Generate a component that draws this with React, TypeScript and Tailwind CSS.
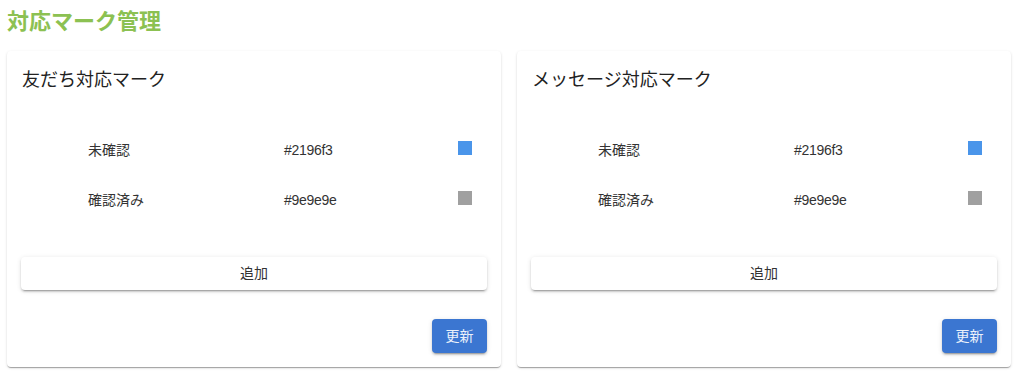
import React from "react";

type Mark = { label: string; color: string; swatch: string };

const marks: Mark[] = [
  { label: "未確認", color: "#2196f3", swatch: "bg-[#4a95ea]" },
  { label: "確認済み", color: "#9e9e9e", swatch: "bg-[#a0a0a0]" },
];

function MarkCard({ title }: { title: string }) {
  return (
    <div className="bg-white rounded-[4px] shadow-[0_2px_1px_-1px_rgba(0,0,0,0.2),0_1px_1px_0_rgba(0,0,0,0.14),0_1px_3px_0_rgba(0,0,0,0.12)] px-[14px] pt-4 pb-[14px]">
      <h2 className="text-[18px] leading-[26px] text-[#222] pl-[1px]">{title}</h2>

      {/* mark list */}
      <div className="mt-8">
        {marks.map((m) => (
          <div key={m.label} className="flex items-center h-[50px] text-[14px] text-[#333]">
            <div className="pl-[67px] w-[263px]">{m.label}</div>
            <div className="flex-1 tracking-[-0.3px]">{m.color}</div>
            <div className={`w-[14px] h-[14px] mr-[15px] -mt-[4px] ${m.swatch}`} />
          </div>
        ))}
      </div>

      <button className="mt-8 w-full h-[33px] rounded-[4px] bg-white text-[14px] text-[#333] shadow-[0_3px_1px_-2px_rgba(0,0,0,0.2),0_2px_2px_0_rgba(0,0,0,0.14),0_1px_5px_0_rgba(0,0,0,0.12)]">
        追加
      </button>

      <div className="flex justify-end mt-[29px]">
        <button className="w-[55px] h-[34px] rounded-[4px] bg-[#3b76d1] text-[14px] text-white/90 shadow-[0_3px_1px_-2px_rgba(0,0,0,0.2),0_2px_2px_0_rgba(0,0,0,0.14),0_1px_5px_0_rgba(0,0,0,0.12)]">
          更新
        </button>
      </div>
    </div>
  );
}

export default function App() {
  return (
    <main
      className="w-[1024px] h-[381px] bg-white pl-[7px] pr-[13px] overflow-hidden"
      style={{ fontFamily: '"Liberation Sans", "Noto Sans CJK JP", sans-serif' }}
    >
      <h1 className="pt-[6px] text-[22px] leading-8 font-bold text-[#8cc152]">対応マーク管理</h1>
      <div className="grid grid-cols-2 gap-4 mt-[13px]">
        <MarkCard title="友だち対応マーク" />
        <MarkCard title="メッセージ対応マーク" />
      </div>
    </main>
  );
}
